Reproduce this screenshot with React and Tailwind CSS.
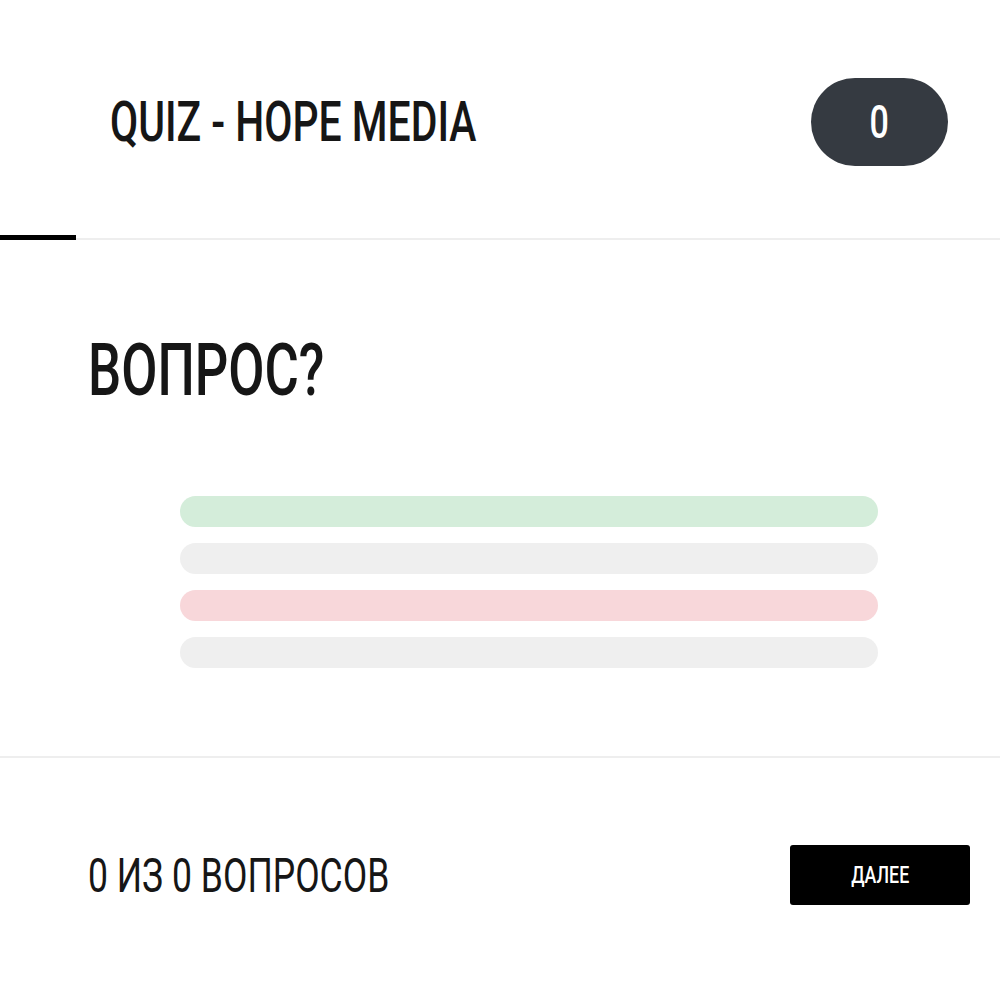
const font = { fontFamily: 'Roboto, "Liberation Sans", sans-serif' };

const options = ["bg-[#d4edda]", "bg-[#efefef]", "bg-[#f8d7da]", "bg-[#efefef]"];

// the reference face is a condensed grotesk; Roboto squeezed on x stands in for it
const narrow = "inline-block origin-left scale-x-[0.73]";

export default function App() {
    return (
        <div className="min-h-[1000px] w-[1000px] bg-white text-[#161616]" style={font}>
            {/* header */}
            <header className="relative border-b-2 border-[#eeeeee]">
                <div className="flex h-[238px] items-center justify-between pl-[110px] pr-[52px] pt-[5px]">
                    <h1 className={`${narrow} whitespace-nowrap text-[56px] font-medium leading-none`}>QUIZ - HOPE MEDIA</h1>
                    <div className="flex h-[88px] w-[137px] items-center justify-center rounded-full bg-[#353a41] text-white">
                        <span className="inline-block scale-x-[0.74] text-[46px] font-medium leading-none">0</span>
                    </div>
                </div>
                <div className="absolute -bottom-[2px] left-0 h-[5px] w-[76px] bg-black" />
            </header>

            {/* question */}
            <main className="border-b-2 border-[#eeeeee] pb-[88px]">
                <div className="pl-[88px] pt-[95px]">
                    <h2 className={`${narrow} whitespace-nowrap text-[72px] font-medium leading-none`}>ВОПРОС?</h2>
                </div>
                <div className="mt-[89px] flex flex-col gap-[16px] pl-[180px] pr-[122px]">
                    {options.map((c, i) => (
                        <div key={i} className={`h-[31px] rounded-full ${c}`} />
                    ))}
                </div>
            </main>

            {/* footer */}
            <footer className="flex items-center justify-between pl-[88px] pr-[30px] pt-[87px]">
                <div className="inline-block origin-left scale-x-[0.725] whitespace-nowrap text-[49px] leading-none">0 ИЗ 0 ВОПРОСОВ</div>
                <button className="flex h-[60px] w-[180px] items-center justify-center rounded-[3px] bg-black text-white">
                    <span className="inline-block scale-x-[0.74] text-[24px] font-medium leading-none">ДАЛЕЕ</span>
                </button>
            </footer>
        </div>
    );
}
